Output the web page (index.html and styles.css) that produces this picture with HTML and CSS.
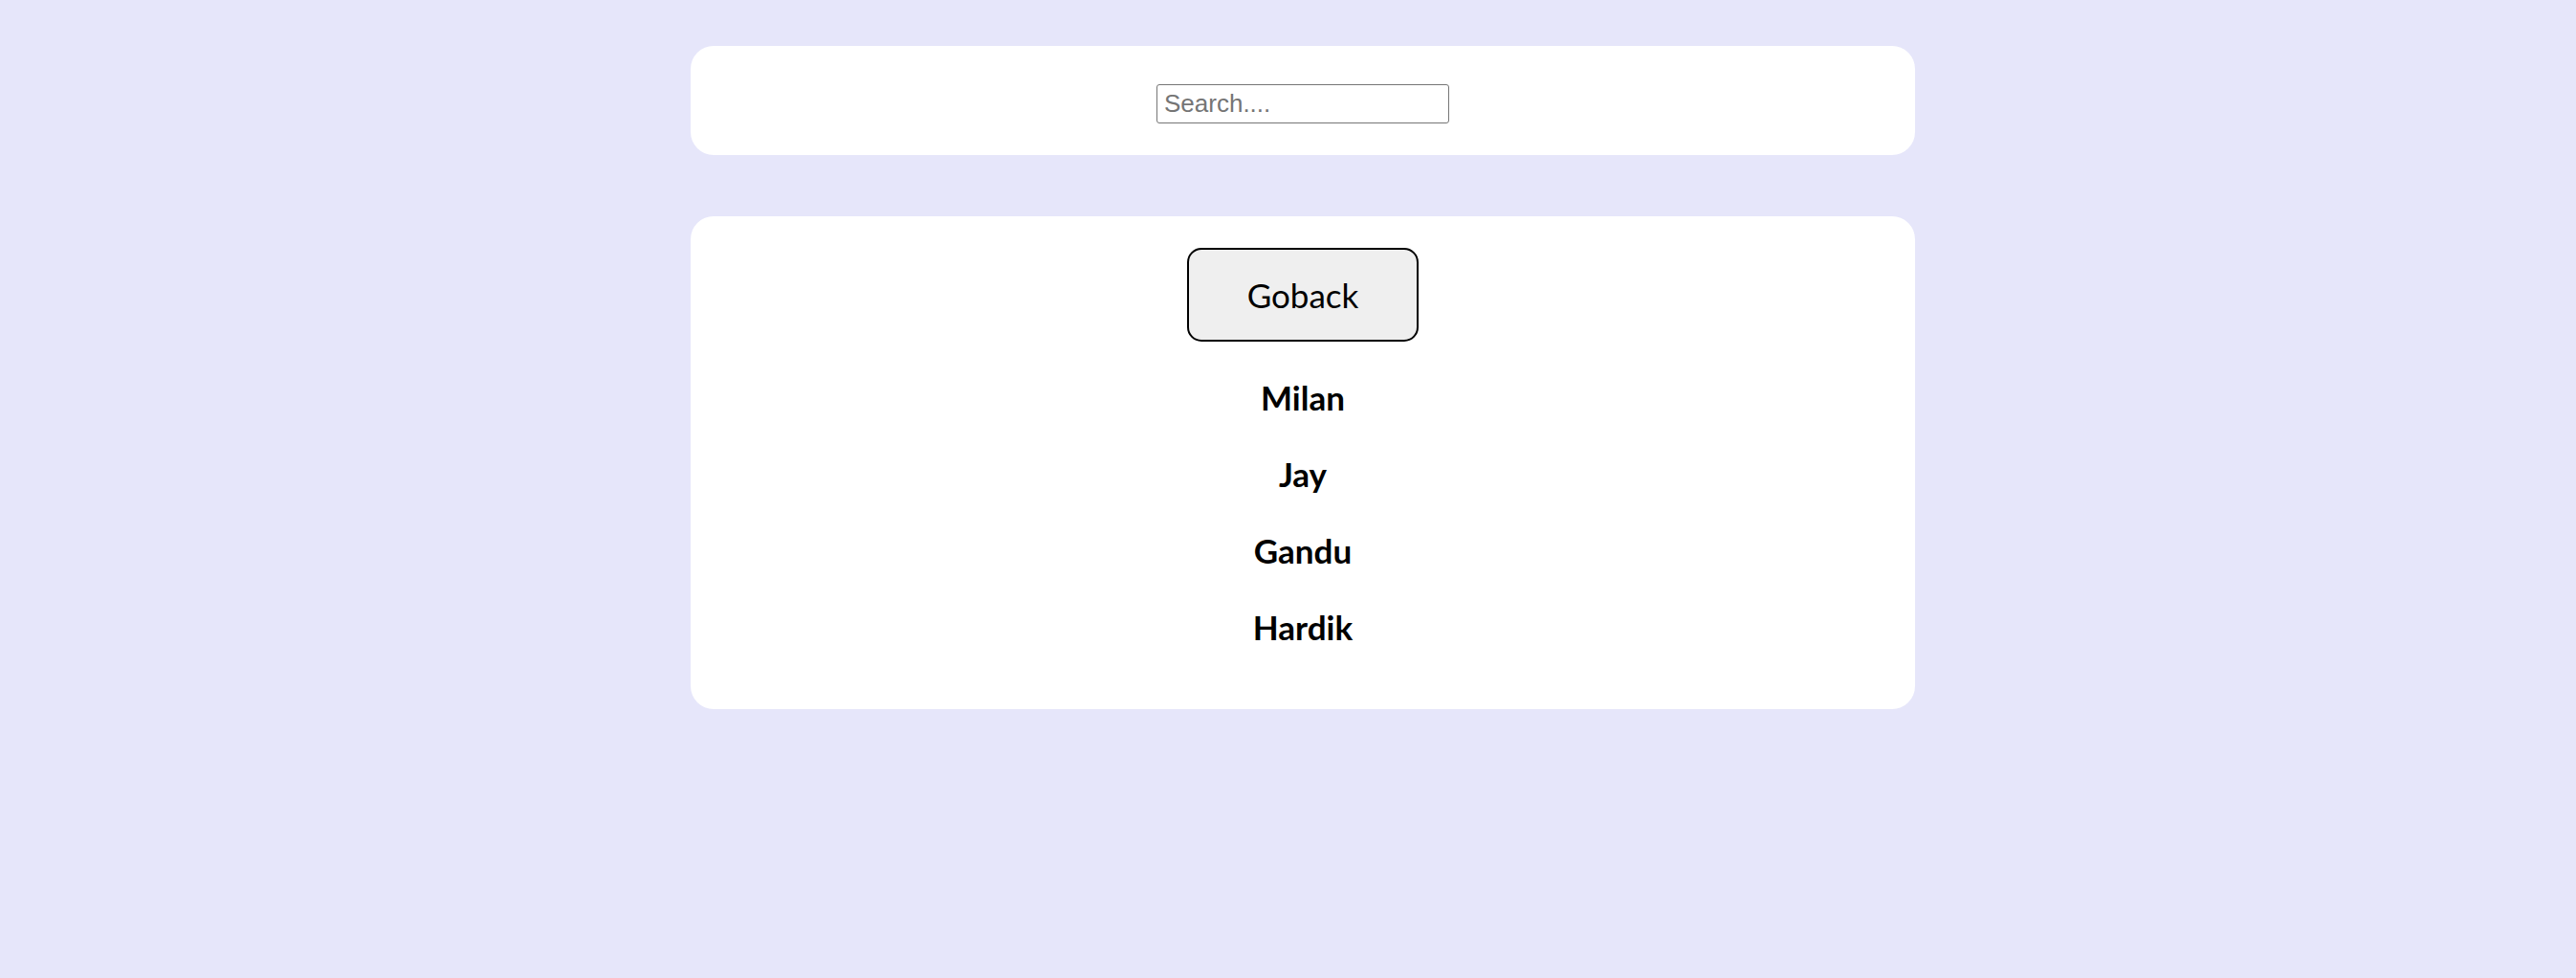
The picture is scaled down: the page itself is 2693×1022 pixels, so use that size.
FILE: index.html
```html
<!DOCTYPE html>
<html>
<head>
<meta charset="utf-8">
<link rel="stylesheet" href="styles.css">
</head>
<body>
<div class="page">
  <div class="card search-card">
    <input class="search" type="text" placeholder="Search....">
  </div>
  <div class="card list-card">
    <button class="goback">Goback</button>
    <div class="names">
      <div class="name">Milan</div>
      <div class="name">Jay</div>
      <div class="name">Gandu</div>
      <div class="name">Hardik</div>
    </div>
  </div>
</div>
</body>
</html>
```
FILE: styles.css
```css
html, body {
  margin: 0;
  padding: 0;
  background: #e6e6fa;
}
body {
  padding: 48px 8px 0 8px;
  height: 1022px;
  box-sizing: border-box;
  overflow: hidden;
}
.page {
  display: flex;
  flex-direction: column;
  align-items: center;
  gap: 64px;
  padding-left: 31px;
}
.card {
  width: 1280px;
  background: #ffffff;
  box-sizing: border-box;
  display: flex;
  flex-direction: column;
  align-items: center;
  border-radius: 24px;
}
.search-card {
  height: 114px;
  padding-top: 40px;
}
.search {
  width: 306px;
  height: 41px;
  box-sizing: border-box;
  border: 1px solid #767676;
  border-radius: 3px;
  padding: 0 7px;
  font-family: "Liberation Sans", Arial, sans-serif;
  font-size: 26px;
  color: #000;
  background: #fff;
  outline: none;
}
.search::placeholder {
  color: #757575;
}
.list-card {
  height: 515px;
  padding-top: 33px;
}
.goback {
  width: 242px;
  height: 98px;
  box-sizing: border-box;
  border: 2px solid #000;
  border-radius: 15px;
  background: #efefef;
  font-family: "Lato", "Noto Sans", sans-serif;
  font-size: 35px;
  color: #000;
  padding: 0;
}
.names {
  display: flex;
  flex-direction: column;
  align-items: center;
  margin-top: 18px;
}
.name {
  font-family: "Lato", "Noto Sans", sans-serif;
  font-weight: 700;
  font-size: 35px;
  line-height: 80px;
  height: 80px;
  color: #000;
}
```
